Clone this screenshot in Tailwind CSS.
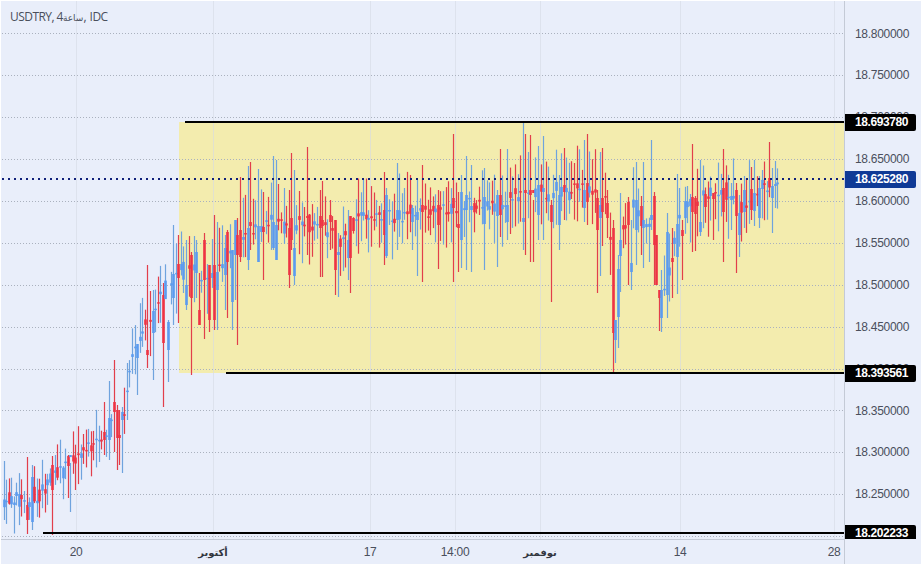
<!DOCTYPE html>
<html lang="en">
<head>
    <meta charset="UTF-8">
    <title>USDTRY</title>
    <script src="https://cdn.jsdelivr.net/npm/@tailwindcss/browser@4"></script>
</head>
<body class="bg-white overflow-hidden">
    <div class="w-[924px] h-[567px] pt-px pl-px pr-[3px] pb-[3px] font-['Liberation_Sans','DejaVu_Sans',sans-serif] text-[12px] tracking-[-0.3px] text-[#4a4f5c]">
        <div class="flex flex-col h-full bg-[#e9eefa]">
            <div class="flex h-[538px]">
                <!-- chart pane, viewBox uses page coordinates -->
                <div class="relative w-[843px] h-full overflow-hidden">
                    <svg id="chart" width="843" height="538" viewBox="1 1 843 538" class="block">
                        <rect x="179" y="122" width="665" height="251" fill="#f3ecae"/>
                        <g stroke="#d6dbe6" stroke-width="1" opacity="0.6">
                            <path d="M76.5 1V539M213.5 1V539M370.5 1V539M455.5 1V539M540.5 1V539M680.5 1V539M834.5 1V539"/>
                        </g>
                        <g stroke="#aab1be" stroke-width="1" stroke-dasharray="1 2" fill="none">
                            <path d="M2 33.5H844M2 75.5H844M2 117.5H844M2 159.5H844M2 201.5H844M2 243.5H844M2 285.5H844M2 327.5H844M2 369.5H844M2 410.5H844M2 452.5H844M2 494.5H844M2 536.5H844"/>
                        </g>
                        <g id="candles"></g>
                        <path d="M2 179H844" stroke="#10207a" stroke-width="2" stroke-dasharray="2 4"/>
                        <path d="M185 122H844M226 373H844M43 533H844" stroke="#000" stroke-width="2"/>
                    </svg>
                    <div class="absolute left-[9px] top-[8px] font-['Open_Sans','DejaVu_Sans',sans-serif] text-[12px] tracking-[-0.55px] leading-4 text-[#4a4f5c]">USDTRY, 4<span class="text-[9px] tracking-normal">ساعة</span>, IDC</div>
                </div>
                <!-- price axis -->
                <div class="relative flex-1 h-full border-l border-[#c4cad6] overflow-hidden">
                    <div class="flex flex-col pt-[11.5px] pl-[10px] leading-[42px]">
                        <div class="h-[41.9px]">18.800000</div>
                        <div class="h-[41.9px]">18.750000</div>
                        <div class="h-[41.9px]">18.700000</div>
                        <div class="h-[41.9px]">18.650000</div>
                        <div class="h-[41.9px]">18.600000</div>
                        <div class="h-[41.9px]">18.550000</div>
                        <div class="h-[41.9px]">18.500000</div>
                        <div class="h-[41.9px]">18.450000</div>
                        <div class="h-[41.9px]">18.400000</div>
                        <div class="h-[41.9px]">18.350000</div>
                        <div class="h-[41.9px]">18.300000</div>
                        <div class="h-[41.9px]">18.250000</div>
                    </div>
                    <div class="absolute left-0 top-[113px] w-[71px] h-[17px] pl-[10px] rounded-r-[2px] bg-black text-white font-bold tracking-[-0.4px] leading-[17px]">18.693780</div>
                    <div class="absolute left-0 top-[170px] w-[71px] h-[17px] pl-[10px] rounded-r-[2px] bg-[#0f3a96] text-white font-bold tracking-[-0.4px] leading-[17px]">18.625280</div>
                    <div class="absolute left-0 top-[364px] w-[71px] h-[17px] pl-[10px] rounded-r-[2px] bg-black text-white font-bold tracking-[-0.4px] leading-[17px]">18.393561</div>
                    <div class="absolute left-0 top-[524px] w-[71px] h-[17px] pl-[10px] rounded-r-[2px] bg-black text-white font-bold tracking-[-0.4px] leading-[17px]">18.202233</div>
                </div>
            </div>
            <div class="flex flex-1">
                <!-- time axis: zero width boxes centred on their ticks -->
                <div class="flex items-center w-[843px] border-t border-[#c4cad6]">
                    <div class="w-0 ml-[75px] flex justify-center whitespace-nowrap">20</div>
                    <div class="w-0 ml-[137px] flex justify-center whitespace-nowrap font-semibold text-[10px] tracking-normal text-[#33363f]">أكتوبر</div>
                    <div class="w-0 ml-[157px] flex justify-center whitespace-nowrap">17</div>
                    <div class="w-0 ml-[85px] flex justify-center whitespace-nowrap">14:00</div>
                    <div class="w-0 ml-[85px] flex justify-center whitespace-nowrap font-semibold text-[10px] tracking-normal text-[#33363f]">نوفمبر</div>
                    <div class="w-0 ml-[140px] flex justify-center whitespace-nowrap">14</div>
                    <div class="w-0 ml-[154px] flex justify-center whitespace-nowrap">28</div>
                </div>
                <div class="flex-1 border-l border-[#c4cad6]"></div>
            </div>
        </div>
    </div>
    <script>
        // x, y of the price path
        var path = [[0,497],[20,500],[30,505],[50,480],[70,460],[85,448],[100,440],[110,427],[117,420],[125,413],[130,367],[140,333],[155,307],[165,287],[175,273],[190,263],[200,280],[215,267],[225,260],[235,240],[250,229],[270,222],[300,222],[320,226],[340,238],[355,219],[380,217],[400,216],[430,212],[445,209],[470,204],[500,208],[520,193],[545,193],[570,190],[590,187],[600,190],[607,200],[612,260],[617,300],[622,235],[630,205],[640,210],[650,230],[655,245],[660,290],[665,295],[670,260],[675,235],[682,205],[700,197],[715,195],[735,195],[742,215],[750,200],[760,190],[776,185]];
        // wicks read off the picture: x, high, low, colour, body top, body bottom
        var marks = [
            [4,461,520,'b'],[27,457,534,'r',505,520],[32,465,530,'b',477,522],[53,456,535,'r',465,490],[69,455,498,'r',456,466],[71,463,512,'b'],
            [103,402,455,'r',432,440],[110,381,460,'b',418,440],[113,360,452,'r',402,412],[116,405,470,'r',410,438],[120,410,465,'r',435,438],[123,407,473,'b',412,420],[126,363,420,'b'],
            [137,350,395,'b',344,358],[147,330,392,'b'],[148,265,368,'r',350,355],[153,290,380,'b',311,333],[162,215,317,'b',305,312],[164,283,407,'r',295,343],[168,320,382,'b',322,350],
            [174,225,325,'b',274,298],[179,235,323,'r',264,278],[185,240,310,'b',285,305],[192,252,375,'r',255,298],[197,240,298,'b',252,273],[200,273,325,'r',310,325],
            [205,233,339,'r',240,280],[210,270,332,'r',265,320],[213,215,330,'r',265,320],[216,222,330,'b',272,290],[225,235,310,'b',248,275],[228,230,318,'r',232,262],
            [231,255,330,'b',250,302],[234,222,300,'b',220,255],[237,218,345,'r',235,255],[241,177,262,'r',230,257],[247,166,270,'b',228,260],[249,162,250,'r',222,226],
            [259,169,262,'b',226,262],[262,192,280,'r',227,232],[273,156,250,'b',222,248],[275,160,255,'b',225,260],[288,171,262,'r',228,240],[291,153,250,'r',218,240],[290,190,288,'r',228,275],[293,170,285,'b',248,276],
            [308,147,255,'r',216,218],[319,190,277,'r',216,228],[322,181,277,'r',220,226],[329,200,250,'r',215,222],[334,227,295,'r',220,270],[337,233,297,'b',252,255],[351,217,293,'r',216,258],[347,210,280,'b',240,258],
            [383,172,265,'r',210,235],[386,188,258,'b',195,256],[397,163,250,'b',210,220],[412,205,250,'b',208,222],[417,180,276,'b',212,220],[422,165,282,'r',205,212],
            [437,190,269,'r',205,225],[453,134,282,'r',198,208],[458,192,272,'r',224,228],[461,175,268,'b',192,240],[467,156,270,'b',195,210],[472,165,272,'b',206,210],[484,168,270,'b',197,224],
            [499,149,237,'r',195,215],[497,190,267,'b',195,216],[507,149,240,'b',205,222],[522,122,250,'b',218,222],[525,134,255,'r',190,193],[530,135,262,'r',190,195],[533,200,262,'r',190,193],[538,146,240,'b',185,215],[543,136,240,'b',188,192],
            [552,200,302,'r',205,222],[558,175,250,'b',195,225],[565,148,220,'r',185,192],
            [584,140,222,'b',190,208],[587,134,225,'r',183,202],[597,190,293,'r',198,230],[601,152,276,'b',205,218],[603,148,246,'r',198,212],[608,190,238,'r',203,218],
            [613,220,374,'r',228,333],[615,320,363,'b',320,340],[618,255,348,'b',269,317],[621,193,292,'b',240,256],[628,197,285,'r',202,225],[631,220,290,'b',263,272],[636,162,265,'b',200,230],[641,196,255,'r',206,226],[644,162,268,'b',220,228],[651,140,230,'b',215,220],
            [654,192,285,'r',196,245],[656,235,283,'r',235,285],[658,240,324,'r',260,283],[659,290,331,'r',290,298],[662,270,332,'b',290,318],[667,213,318,'b',232,295],[672,228,298,'r',258,262],[677,174,294,'b',224,257],[681,220,280,'r',230,236],
            [691,144,252,'r',197,212],[694,196,251,'r',198,214],[699,160,236,'b',222,232],[712,195,240,'r',193,199],[722,149,262,'r',188,212],[730,183,230,'b',196,200],[737,183,273,'r',190,216],[739,195,257,'b',213,235],[744,176,228,'b',190,212],
            [752,167,220,'r',189,210],[755,160,226,'b',193,211],[760,176,228,'b',188,218],[771,168,233,'b',186,198],[775,161,208,'b',184,186]
        ];
        var seed = 20221130;
        function rnd() {
            seed = (seed * 1664525 + 1013904223) % 4294967296;
            return seed / 4294967296;
        }
        function midAt(x) {
            for (var k = 1; k < path.length; k++) {
                if (x <= path[k][0]) {
                    var a = path[k - 1], b = path[k];
                    return a[1] + (b[1] - a[1]) * (x - a[0]) / (b[0] - a[0]);
                }
            }
            return path[path.length - 1][1];
        }
        var bars = [];
        for (var i = 0; i <= 301; i++) {
            var x = 3.5 + i * 2.57;
            var mid = midAt(x) + (rnd() - 0.5) * 12;
            var reach = x < 130 ? 24 : 36;
            var size = 1 + rnd() * rnd() * rnd() * 22;
            bars.push({
                x: x,
                hi: mid - 6 - rnd() * reach,
                lo: mid + 6 + rnd() * reach,
                top: mid - size / 2,
                bot: mid + size / 2,
                red: rnd() < 0.42
            });
        }
        marks.forEach(function (m) {
            var bar = bars[Math.max(0, Math.min(301, Math.round((m[0] - 3.5) / 2.57)))];
            bar.hi = m[1];
            bar.lo = m[2];
            bar.red = m[3] == 'r';
            if (m[4]) {
                bar.top = m[4];
                bar.bot = m[5];
            }
        });
        var out = '';
        bars.forEach(function (b) {
            var px = Math.round(b.x);
            var wick = b.red ? '#e23e4b' : '#6fa3de';
            var body = b.red ? '#ee3344' : '#5b9bef';
            out += '<rect x="' + (px - 0.1) + '" y="' + b.hi.toFixed(1) + '" width="1.2" height="' + (b.lo - b.hi).toFixed(1) + '" fill="' + wick + '"/>';
            out += '<rect x="' + (px - 0.8) + '" y="' + b.top.toFixed(1) + '" width="2.6" height="' + Math.max(1.5, b.bot - b.top).toFixed(1) + '" fill="' + body + '"/>';
        });
        document.getElementById('candles').innerHTML = out;
    </script>
</body>
</html>
